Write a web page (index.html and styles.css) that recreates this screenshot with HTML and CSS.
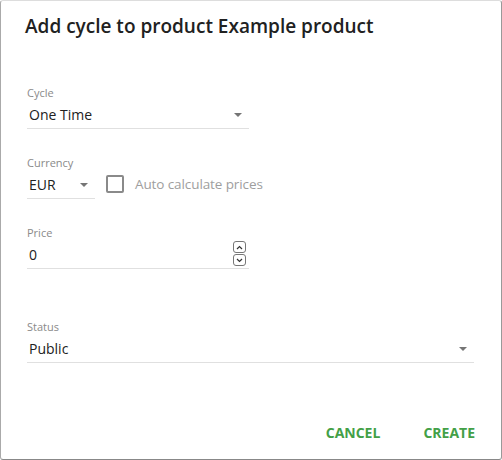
FILE: index.html
```html
<!DOCTYPE html>
<html lang="en">
<head>
    <meta charset="UTF-8">
    <title>Add cycle</title>
    <link rel="stylesheet" href="styles.css">
</head>
<body>
    <div class="dialog">
        <h2 class="dialog-title">Add cycle to product Example product</h2>

        <div class="dialog-content">
            <!-- Cycle -->
            <div class="field field-md">
                <label class="field-label">Cycle</label>
                <div class="field-input">
                    <span class="field-value">One Time</span>
                    <span class="select-arrow"></span>
                </div>
            </div>

            <!-- Currency + auto calc -->
            <div class="currency-row">
                <div class="field field-sm">
                    <label class="field-label">Currency</label>
                    <div class="field-input">
                        <span class="field-value">EUR</span>
                        <span class="select-arrow"></span>
                    </div>
                </div>
                <label class="checkbox">
                    <span class="checkbox-box"></span>
                    <span class="checkbox-text">Auto calculate prices</span>
                </label>
            </div>

            <!-- Price -->
            <div class="field field-md">
                <label class="field-label">Price</label>
                <div class="field-input">
                    <span class="field-value">0</span>
                    <span class="spinner">
                        <span class="spin-btn">
                            <svg width="7" height="5" viewBox="0 0 7 5"><path d="M1 4 L3.5 1.5 L6 4" fill="none" stroke="#333" stroke-width="1.2"/></svg>
                        </span>
                        <span class="spin-btn">
                            <svg width="7" height="5" viewBox="0 0 7 5"><path d="M1 1 L3.5 3.5 L6 1" fill="none" stroke="#333" stroke-width="1.2"/></svg>
                        </span>
                    </span>
                </div>
            </div>

            <!-- Status -->
            <div class="field field-lg">
                <label class="field-label">Status</label>
                <div class="field-input">
                    <span class="field-value">Public</span>
                    <span class="select-arrow"></span>
                </div>
            </div>
        </div>

        <div class="dialog-actions">
            <button class="action-button">Cancel</button>
            <button class="action-button">Create</button>
        </div>
    </div>
</body>
</html>
```

FILE: styles.css
```css
/* Global */
* {
    box-sizing: border-box;
    font-family: "Open Sans", "Liberation Sans", sans-serif;
}

body {
    margin: 0;
    padding: 0;
    background-color: #ffffff;
}

/* Dialog */
.dialog {
    width: 502px;
    height: 460px;
    background-color: white;
    border: 1px solid #aaa;
    border-top-color: #ddd;
    border-right-color: #999;
    border-bottom-color: #888;
    border-radius: 3px;
    display: flex;
    flex-direction: column;
}

.dialog-title {
    margin: 0;
    padding: 13px 24px 0;
    font-size: 19px;
    line-height: 24px;
    font-weight: 600;
    color: #212121;
}

.dialog-content {
    padding: 48px 26px 0;
    display: flex;
    flex-direction: column;
    gap: 27px;
}

/* Fields */
.field-label {
    display: block;
    font-size: 11px;
    line-height: 14px;
    color: #8a8a8a;
}

.field-input {
    display: flex;
    align-items: center;
    justify-content: space-between;
    height: 29px;
    padding: 2px 0 0 2px;
    border-bottom: 1px solid #e0e0e0;
}

.field-value {
    font-size: 14px;
    line-height: 18px;
    color: #212121;
}

.field-sm {
    width: 68px;
}

.field-md {
    width: 222px;
}

.field-lg {
    width: 447px;
    margin-top: 24px;
}

.select-arrow {
    width: 0;
    height: 0;
    margin-right: 7px;
    border-left: 4px solid transparent;
    border-right: 4px solid transparent;
    border-top: 4px solid #757575;
}

/* Number spinner */
.spinner {
    display: flex;
    flex-direction: column;
    margin-right: 3px;
    margin-top: -2px;
}

.spin-btn {
    width: 13px;
    height: 12px;
    border: 1px solid #777;
    border-radius: 3px;
    display: flex;
    align-items: center;
    justify-content: center;
    margin-bottom: 1px;
}

/* Currency row + checkbox */
.currency-row {
    display: flex;
    align-items: flex-end;
    gap: 11px;
}

.checkbox {
    display: flex;
    align-items: center;
    gap: 11px;
    height: 29px;
    margin-bottom: 1px;
}

.checkbox-box {
    width: 18px;
    height: 18px;
    border: 2px solid #8a8a8a;
    border-radius: 2px;
}

.checkbox-text {
    font-size: 13.5px;
    letter-spacing: -0.1px;
    color: #9e9e9e;
}

/* Actions */
.dialog-actions {
    margin-top: auto;
    padding: 0 26px 16px;
    display: flex;
    justify-content: flex-end;
    gap: 43px;
}

.action-button {
    background: none;
    border: none;
    padding: 0;
    font-size: 14px;
    line-height: 20px;
    font-weight: 700;
    text-transform: uppercase;
    color: #43a047;
    cursor: pointer;
}
```
